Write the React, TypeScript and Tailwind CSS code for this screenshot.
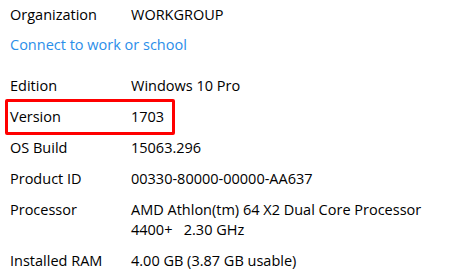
const rows: { label: string; value: string[] }[] = [
  { label: "Edition", value: ["Windows 10 Pro"] },
  { label: "Version", value: ["1703"] },
  { label: "OS Build", value: ["15063.296"] },
  { label: "Product ID", value: ["00330-80000-00000-AA637"] },
  { label: "Processor", value: ["AMD Athlon(tm) 64 X2 Dual Core Processor", "4400+\u00a0\u00a0\u00a02.30 GHz"] },
  { label: "Installed RAM", value: ["4.00 GB (3.87 GB usable)"] },
];

export default function App() {
  return (
    <div className="h-[276px] w-[451px] overflow-hidden bg-white pl-[10px] pt-[5px] font-['Open_Sans',sans-serif] text-[14.5px] leading-[20px] text-[#000]">
      <div className="flex">
        <span className="w-[121px] shrink-0">Organization</span>
        <span>WORKGROUP</span>
      </div>
      <p className="mt-[10px] text-[#2b8ee9]">Connect to work or school</p>

      <div className="mt-[21px] flex flex-col gap-[11px]">
        {rows.map((r) => (
          <div key={r.label} className="relative flex">
            {r.label === "Version" && (
              <div className="absolute left-[-5px] top-[-8px] h-[36px] w-[170px] rounded-[2px] border-[3px] border-[#f00]" />
            )}
            <span className="w-[121px] shrink-0">{r.label}</span>
            <div>
              {r.value.map((v) => (
                <p key={v}>{v}</p>
              ))}
            </div>
          </div>
        ))}
      </div>
    </div>
  );
}
